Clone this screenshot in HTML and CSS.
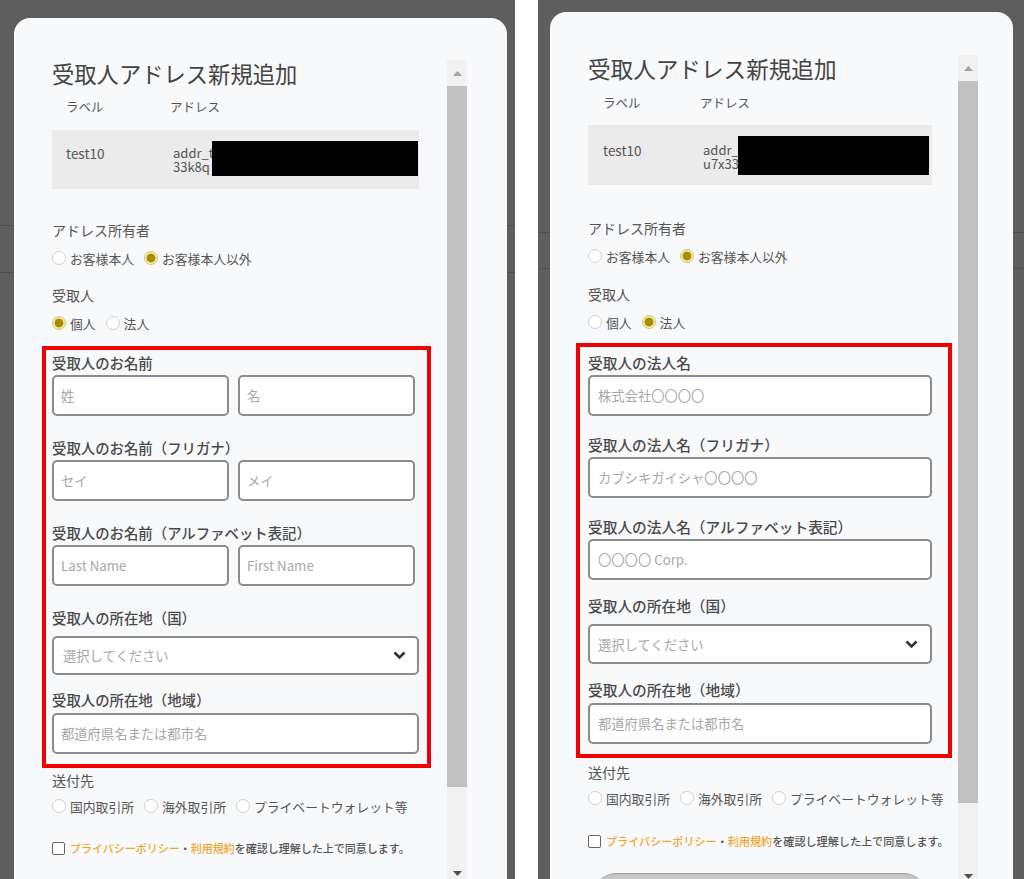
FILE: index.html
```html
<!DOCTYPE html>
<html lang="ja">
<head>
    <meta charset="UTF-8">
    <meta name="viewport" content="width=device-width, initial-scale=1.0">
    <title>受取人アドレス新規追加</title>
    <link rel="stylesheet" href="styles.css">
</head>
<body>
    <div class="shots">

        <!-- 個人 -->
        <section class="shot shot-left">
            <div class="modal">
                <div class="modal-body">
                    <h1 class="modal-title">受取人アドレス新規追加</h1>
                    <div class="addr-head"><span class="col-label">ラベル</span><span>アドレス</span></div>
                    <div class="addr-box">
                        <span class="col-label">test10</span>
                        <span class="addr-text">addr_t<br>33k8q</span>
                        <span class="redact"></span>
                    </div>

                    <p class="group-title owner-title">アドレス所有者</p>
                    <div class="radio-row">
                        <label class="radio-opt"><span class="radio"></span>お客様本人</label>
                        <label class="radio-opt"><span class="radio checked"></span>お客様本人以外</label>
                    </div>

                    <p class="group-title recipient-title">受取人</p>
                    <div class="radio-row">
                        <label class="radio-opt"><span class="radio checked"></span>個人</label>
                        <label class="radio-opt"><span class="radio"></span>法人</label>
                    </div>

                    <div class="red-box">
                        <div class="field">
                            <span class="field-label">受取人のお名前</span>
                            <div class="name-row">
                                <input class="text-input" type="text" placeholder="姓">
                                <input class="text-input" type="text" placeholder="名">
                            </div>
                        </div>
                        <div class="field">
                            <span class="field-label">受取人のお名前（フリガナ）</span>
                            <div class="name-row">
                                <input class="text-input" type="text" placeholder="セイ">
                                <input class="text-input" type="text" placeholder="メイ">
                            </div>
                        </div>
                        <div class="field">
                            <span class="field-label">受取人のお名前（アルファベット表記）</span>
                            <div class="name-row">
                                <input class="text-input" type="text" placeholder="Last Name">
                                <input class="text-input" type="text" placeholder="First Name">
                            </div>
                        </div>
                        <div class="field field-select">
                            <span class="field-label">受取人の所在地（国）</span>
                            <div class="select-box">
                                <span>選択してください</span>
                                <svg class="chevron" width="13" height="9" viewBox="0 0 13 9"><polyline points="1.5,1.5 6.5,6.5 11.5,1.5" fill="none" stroke="#333" stroke-width="2.6"/></svg>
                            </div>
                        </div>
                        <div class="field field-last">
                            <span class="field-label">受取人の所在地（地域）</span>
                            <input class="text-input" type="text" placeholder="都道府県名または都市名">
                        </div>
                    </div>

                    <p class="group-title send-title">送付先</p>
                    <div class="radio-row send-row">
                        <label class="radio-opt"><span class="radio"></span>国内取引所</label>
                        <label class="radio-opt"><span class="radio"></span>海外取引所</label>
                        <label class="radio-opt"><span class="radio"></span>プライベートウォレット等</label>
                    </div>

                    <div class="agree-row">
                        <span class="checkbox"></span>
                        <span><a href="#">プライバシーポリシー</a>・<a href="#">利用規約</a>を確認し理解した上で同意します。</span>
                    </div>
                </div>

                <div class="scrollbar">
                    <div class="sb-btn"><svg width="9" height="5" viewBox="0 0 9 5"><polygon points="0,5 4.5,0 9,5" fill="#a3a3a3"/></svg></div>
                    <div class="sb-thumb"></div>
                    <div class="sb-track"></div>
                    <div class="sb-btn"><svg width="9" height="5" viewBox="0 0 9 5"><polygon points="0,0 4.5,5 9,0" fill="#505050"/></svg></div>
                </div>
            </div>
        </section>

        <!-- 法人 -->
        <section class="shot shot-right">
            <div class="modal">
                <div class="modal-body">
                    <h1 class="modal-title">受取人アドレス新規追加</h1>
                    <div class="addr-head"><span class="col-label">ラベル</span><span>アドレス</span></div>
                    <div class="addr-box">
                        <span class="col-label">test10</span>
                        <span class="addr-text">addr_<br>u7x33</span>
                        <span class="redact"></span>
                    </div>

                    <p class="group-title owner-title">アドレス所有者</p>
                    <div class="radio-row">
                        <label class="radio-opt"><span class="radio"></span>お客様本人</label>
                        <label class="radio-opt"><span class="radio checked"></span>お客様本人以外</label>
                    </div>

                    <p class="group-title recipient-title">受取人</p>
                    <div class="radio-row">
                        <label class="radio-opt"><span class="radio"></span>個人</label>
                        <label class="radio-opt"><span class="radio checked"></span>法人</label>
                    </div>

                    <div class="red-box">
                        <div class="field">
                            <span class="field-label">受取人の法人名</span>
                            <input class="text-input" type="text" placeholder="株式会社〇〇〇〇">
                        </div>
                        <div class="field">
                            <span class="field-label">受取人の法人名（フリガナ）</span>
                            <input class="text-input" type="text" placeholder="カブシキガイシャ〇〇〇〇">
                        </div>
                        <div class="field">
                            <span class="field-label">受取人の法人名（アルファベット表記）</span>
                            <input class="text-input" type="text" placeholder="〇〇〇〇 Corp.">
                        </div>
                        <div class="field field-select">
                            <span class="field-label">受取人の所在地（国）</span>
                            <div class="select-box">
                                <span>選択してください</span>
                                <svg class="chevron" width="13" height="9" viewBox="0 0 13 9"><polyline points="1.5,1.5 6.5,6.5 11.5,1.5" fill="none" stroke="#333" stroke-width="2.6"/></svg>
                            </div>
                        </div>
                        <div class="field field-last">
                            <span class="field-label">受取人の所在地（地域）</span>
                            <input class="text-input" type="text" placeholder="都道府県名または都市名">
                        </div>
                    </div>

                    <p class="group-title send-title">送付先</p>
                    <div class="radio-row send-row">
                        <label class="radio-opt"><span class="radio"></span>国内取引所</label>
                        <label class="radio-opt"><span class="radio"></span>海外取引所</label>
                        <label class="radio-opt"><span class="radio"></span>プライベートウォレット等</label>
                    </div>

                    <div class="agree-row">
                        <span class="checkbox"></span>
                        <span><a href="#">プライバシーポリシー</a>・<a href="#">利用規約</a>を確認し理解した上で同意します。</span>
                    </div>

                    <button class="submit-btn" type="button"></button>
                </div>

                <div class="scrollbar">
                    <div class="sb-btn"><svg width="9" height="5" viewBox="0 0 9 5"><polygon points="0,5 4.5,0 9,5" fill="#a3a3a3"/></svg></div>
                    <div class="sb-thumb"></div>
                    <div class="sb-track"></div>
                    <div class="sb-btn"><svg width="9" height="5" viewBox="0 0 9 5"><polygon points="0,0 4.5,5 9,0" fill="#505050"/></svg></div>
                </div>
            </div>
        </section>

    </div>
</body>
</html>
```

FILE: styles.css
```css
* {
    box-sizing: border-box;
}

body {
    margin: 0;
    background-color: #fff;
    color: #555;
    font-family: "Noto Sans CJK JP", "Noto Sans", sans-serif;
}

.shots {
    display: flex;
    height: 879px;
    overflow: hidden;
}

/* dimmed page behind each modal */
.shot {
    height: 879px;
    overflow: hidden;
    background-color: #5e5e5e;
}
.shot-left {
    width: 515px;
    margin-right: 23px;
    padding: 18px 8px 0 14px;
    background:
        linear-gradient(#4f4f4f, #4f4f4f) 0 225px / 100% 1px no-repeat,
        linear-gradient(#4f4f4f, #4f4f4f) 0 272px / 100% 1px no-repeat,
        linear-gradient(#6e5650, #6e5650) 0 540px / 100% 1px no-repeat,
        #5e5e5e;
}
.shot-right {
    width: 486px;
    padding: 12px 0 0 12px;
    background:
        linear-gradient(#4f4f4f, #4f4f4f) 0 232px / 100% 1px no-repeat,
        linear-gradient(#4f4f4f, #4f4f4f) 0 268px / 100% 1px no-repeat,
        #5e5e5e;
}

/* modal */
.modal {
    display: flex;
    align-items: flex-start;
    height: 100%;
    overflow: hidden;
    background-color: #f8f9fb;
    border-radius: 16px 16px 0 0;
}
.shot-left .modal {
    width: 493px;
    padding: 40px 40px 0 38px;
}
.shot-right .modal {
    width: 463px;
    padding: 42px 35px 0 38px;
}
.modal-body {
    flex: none;
}
.shot-left .modal-body {
    width: 367px;
    margin-right: 28px;
}
.shot-right .modal-body {
    width: 344px;
    margin-right: 26px;
}

.modal-title {
    margin: 0;
    font-size: 22.3px;
    line-height: 30px;
    font-weight: 400;
    color: #444;
    white-space: nowrap;
}
.shot-right .modal-title {
    font-size: 22.6px;
}

/* address table */
.addr-head {
    display: flex;
    margin-top: 9px;
    padding-left: 14px;
    font-size: 12.5px;
    line-height: 20px;
}
.addr-head .col-label {
    width: 104px;
}
.shot-right .addr-head {
    padding-left: 15px;
}
.shot-right .addr-head .col-label {
    width: 97px;
}

.addr-box {
    position: relative;
    display: flex;
    height: 59px;
    margin-top: 13px;
    padding: 16px 0 0 14px;
    background-color: #ebebeb;
    font-size: 13.5px;
    line-height: 14px;
}
.addr-box .col-label {
    width: 107px;
    flex: none;
}
.shot-right .addr-box {
    height: 60px;
    margin-top: 12px;
    padding: 18px 0 0 15px;
}
.shot-right .addr-box .col-label {
    width: 100px;
}
.addr-text {
    flex: 1;
    white-space: nowrap;
    font-size: 13px;
    line-height: 14px;
}
.redact {
    position: absolute;
    left: 160px;
    top: 11px;
    width: 206px;
    height: 35px;
    background-color: #000;
}
.shot-right .redact {
    left: 150px;
    width: 191px;
    height: 39px;
}

/* radios */
.group-title {
    margin: 0;
    font-size: 14px;
    line-height: 20px;
    color: #555;
}
.owner-title {
    margin-top: 31px;
}
.recipient-title {
    margin-top: 17px;
}
.shot-right .owner-title {
    margin-top: 33px;
}
.shot-right .recipient-title {
    margin-top: 18px;
}

.radio-row {
    display: flex;
    align-items: center;
    height: 20px;
    margin-top: 8px;
    font-size: 12.8px;
    white-space: nowrap;
}
.radio-opt {
    display: flex;
    align-items: center;
    gap: 4px;
    margin-right: 10px;
}
.radio {
    width: 14px;
    height: 14px;
    border: 1px solid #d2d2d2;
    border-radius: 50%;
    background-color: #fff;
}
.radio.checked {
    border-color: #d9c76e;
    background: radial-gradient(circle, #a88d00 0 4px, #f4e9ac 4.8px);
}

/* annotation frame */
.red-box {
    margin: 13px -12px 0 -10px;
    padding: 3px 8px 10px 6px;
    border: 4px solid #f00000;
}
.shot-right .red-box {
    margin: 11px -20px 0 -12px;
    padding: 6px 16px 10px 8px;
}

.field + .field {
    margin-top: 22px;
}
.shot-right .field + .field {
    margin-top: 19px;
}
.field-label {
    display: block;
    margin-bottom: 2px;
    font-size: 14.4px;
    line-height: 20px;
    font-weight: 500;
    color: #4a4a4a;
    white-space: nowrap;
}
.shot-right .field-label {
    font-size: 14.7px;
}
.name-row {
    display: flex;
    gap: 9px;
    margin-right: 4px;
}

.text-input {
    display: block;
    width: 100%;
    height: 41px;
    margin: 0;
    padding: 0 7px;
    border: 2px solid #8c8c8c;
    border-radius: 5px;
    background-color: #fff;
    font-family: "Noto Sans CJK JP", sans-serif;
    font-size: 13.3px;
    color: #333;
    outline: none;
}
.shot-right .text-input {
    padding: 0 8px;
}
.text-input::placeholder {
    color: #a8a8a8;
}

.field-select .field-label {
    margin-bottom: 8px;
}
.shot-right .field + .field-select {
    margin-top: 15.5px;
}
.shot-right .field-select .field-label {
    margin-bottom: 8.5px;
}
.field-select + .field {
    margin-top: 15px;
}
.shot-right .field-select + .field {
    margin-top: 16px;
}
.field-last .field-label {
    margin-bottom: 3px;
}

.select-box {
    display: flex;
    align-items: center;
    justify-content: space-between;
    height: 39px;
    padding: 0 11px 0 9px;
    border: 2px solid #8c8c8c;
    border-radius: 5px;
    background-color: #fff;
    font-size: 13.3px;
    color: #a8a8a8;
}
.shot-right .select-box {
    height: 40px;
    padding: 0 12px 0 8px;
}

/* bottom part */
.send-title {
    margin-top: 2px;
}
.shot-right .send-title {
    margin-top: 4px;
}
.send-row {
    margin-top: 6px;
}

.agree-row {
    display: flex;
    align-items: center;
    gap: 5px;
    height: 20px;
    margin-top: 22px;
    font-size: 11px;
    font-weight: 500;
    color: #555;
    white-space: nowrap;
}
.shot-right .agree-row {
    margin-top: 23px;
    font-size: 11.1px;
}
.agree-row a {
    color: #f3a42c;
    text-decoration: none;
}
.checkbox {
    flex: none;
    width: 13px;
    height: 13px;
    border: 1.5px solid #666;
    border-radius: 2px;
    background-color: #fff;
}

.submit-btn {
    display: block;
    width: 332px;
    height: 44px;
    margin: 22px 0 0 6px;
    border: none;
    border-top: 1px solid #9a9a9a;
    border-radius: 22px;
    background-color: #c6c6c6;
}

/* drawn scrollbar */
.scrollbar {
    flex: none;
    display: flex;
    flex-direction: column;
    width: 20px;
    background-color: #f1f1f1;
}
.shot-left .scrollbar {
    height: 826px;
    margin-top: 2px;
}
.shot-right .scrollbar {
    height: 834px;
    margin-top: 1px;
}
.sb-btn {
    display: flex;
    align-items: center;
    justify-content: center;
    height: 26px;
}
.sb-thumb {
    background-color: #c1c1c1;
}
.shot-left .sb-thumb {
    height: 701px;
}
.shot-right .sb-thumb {
    height: 722px;
}
.sb-track {
    flex: 1;
}
```
